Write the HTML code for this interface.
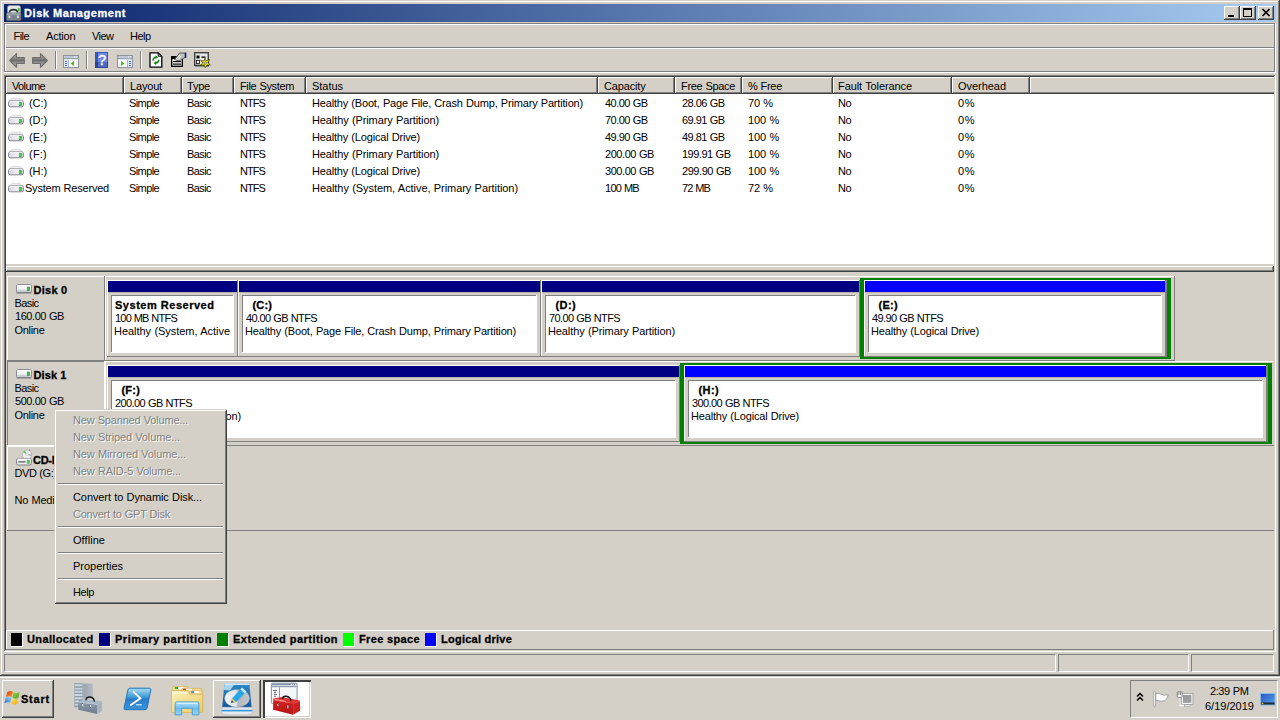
<!DOCTYPE html>
<html><head><meta charset="utf-8"><title>Disk Management</title>
<style>
*{box-sizing:border-box;margin:0;padding:0}
html,body{width:1280px;height:720px;overflow:hidden;background:#d4d0c8}
body{font-family:"Liberation Sans",sans-serif;font-size:11px;color:#000;position:relative}
.a{position:absolute}
.t{position:absolute;white-space:pre;line-height:13px;height:13px;letter-spacing:-0.12px}
.b{font-weight:bold;letter-spacing:0.5px;-webkit-text-stroke:0.3px}
svg{overflow:visible}
</style></head><body>
<div class="a" style="left:0px;top:0px;width:1280px;height:676px;background:#d4d0c8;"></div>
<div class="a" style="left:0px;top:0px;width:1279px;height:1px;background:#d4d0c8;"></div>
<div class="a" style="left:1px;top:1px;width:1277px;height:1px;background:#fff;"></div>
<div class="a" style="left:1px;top:1px;width:1px;height:673px;background:#fff;"></div>
<div class="a" style="left:1279px;top:0px;width:1px;height:676px;background:#404040;"></div>
<div class="a" style="left:0px;top:675px;width:1280px;height:1px;background:#404040;"></div>
<div class="a" style="left:1278px;top:1px;width:1px;height:674px;background:#808080;"></div>
<div class="a" style="left:1px;top:674px;width:1278px;height:1px;background:#808080;"></div>
<div class="a" style="left:4px;top:4px;width:1272px;height:18px;background:linear-gradient(to right,#0a246a,#a6caf0);"></div>
<div class="t b" style="left:24px;top:7px;color:#fff;letter-spacing:0.565px;">Disk Management</div>
<svg class="a" style="left:6px;top:5px" width="16" height="16" viewBox="0 0 16 16"><rect x="1.500" y="0.500" width="13" height="8" rx="2" fill="#e4e6e8" stroke="#8c9094" stroke-width="0.8"/><rect x="12" y="3" width="1.600" height="3.500" fill="#38c838"/><path d="M3.500 7.600 Q3.500 4.600 7.500 4.600 Q11.500 4.600 11.500 7.600" fill="none" stroke="#2c3034" stroke-width="1.700"/><rect x="0.500" y="8" width="14.500" height="7.500" rx="1" fill="#7c848c" stroke="#5c6468" stroke-width="0.8"/><rect x="1" y="8.300" width="13.500" height="1.500" fill="#a4acb4"/><rect x="2.500" y="10.500" width="1.800" height="2.500" fill="#dce0e4"/><rect x="11" y="10.500" width="1.800" height="2.500" fill="#dce0e4"/></svg>
<div class="a" style="left:1224px;top:6px;width:16px;height:14px;background:#d4d0c8;box-shadow:inset -1px -1px 0 #404040,inset 1px 1px 0 #fff,inset -2px -2px 0 #808080"></div>
<div class="a" style="left:1240px;top:6px;width:16px;height:14px;background:#d4d0c8;box-shadow:inset -1px -1px 0 #404040,inset 1px 1px 0 #fff,inset -2px -2px 0 #808080"></div>
<div class="a" style="left:1258px;top:6px;width:16px;height:14px;background:#d4d0c8;box-shadow:inset -1px -1px 0 #404040,inset 1px 1px 0 #fff,inset -2px -2px 0 #808080"></div>
<div class="a" style="left:1228px;top:15px;width:6px;height:2px;background:#000;"></div>
<div class="a" style="left:1243px;top:8px;width:9px;height:9px;border:1px solid #000;border-top-width:2px"></div>
<svg class="a" style="left:1262px;top:9px" width="8" height="7" viewBox="0 0 8 7"><path d="M0.5 0 L7.5 7 M7.5 0 L0.5 7" stroke="#000" stroke-width="1.7"/></svg>
<div class="a" style="left:4px;top:23px;width:1271px;height:1px;background:#808080;"></div>
<div class="a" style="left:4px;top:23px;width:1px;height:49px;background:#808080;"></div>
<div class="a" style="left:5px;top:24px;width:1270px;height:1px;background:#fff;"></div>
<div class="a" style="left:5px;top:24px;width:1px;height:48px;background:#fff;"></div>
<div class="a" style="left:1274px;top:24px;width:1px;height:48px;background:#808080;"></div>
<div class="a" style="left:1275px;top:23px;width:1px;height:50px;background:#fff;"></div>
<div class="a" style="left:6px;top:47px;width:1268px;height:1px;background:#808080;"></div>
<div class="a" style="left:6px;top:48px;width:1268px;height:1px;background:#fff;"></div>
<div class="a" style="left:5px;top:71px;width:1270px;height:1px;background:#808080;"></div>
<div class="a" style="left:4px;top:72px;width:1272px;height:1px;background:#fff;"></div>
<div class="t" style="left:13.5px;top:30px;letter-spacing:-0.559px;">File</div>
<div class="t" style="left:46px;top:30px;letter-spacing:-0.180px;">Action</div>
<div class="t" style="left:92px;top:30px;letter-spacing:-0.539px;">View</div>
<div class="t" style="left:130px;top:30px;letter-spacing:-0.531px;">Help</div>
<div class="a" style="left:55px;top:51px;width:1px;height:18px;background:#808080;"></div>
<div class="a" style="left:56px;top:51px;width:1px;height:18px;background:#fff;"></div>
<div class="a" style="left:86px;top:51px;width:1px;height:18px;background:#808080;"></div>
<div class="a" style="left:87px;top:51px;width:1px;height:18px;background:#fff;"></div>
<div class="a" style="left:140px;top:51px;width:1px;height:18px;background:#808080;"></div>
<div class="a" style="left:141px;top:51px;width:1px;height:18px;background:#fff;"></div>
<svg class="a" style="left:9px;top:53px" width="16" height="15" viewBox="0 0 16 15"><defs><linearGradient id="ga" x1="0" y1="0" x2="0" y2="1"><stop offset="0" stop-color="#c4c4c4"/><stop offset="0.5" stop-color="#6c6c6c"/><stop offset="0.62" stop-color="#8c8c8c"/><stop offset="1" stop-color="#b4b4b4"/></linearGradient></defs><path d="M0.7 7.500 L7.500 0.700 L7.500 4.500 L15.300 4.500 L15.300 10.500 L7.500 10.500 L7.500 14.300 Z" fill="url(#ga)" stroke="#6c6c6c" stroke-width="1.1" stroke-linejoin="round"/></svg>
<svg class="a" style="left:32px;top:53px" width="16" height="15" viewBox="0 0 16 15"><path d="M15.300 7.500 L8.500 0.700 L8.500 4.500 L0.700 4.500 L0.700 10.500 L8.500 10.500 L8.500 14.300 Z" fill="url(#ga)" stroke="#6c6c6c" stroke-width="1.1" stroke-linejoin="round"/></svg>
<svg class="a" style="left:63px;top:55px" width="16" height="13" viewBox="0 0 16 13"><rect x="0.5" y="0.5" width="15" height="12" fill="#f6f6f6" stroke="#8c949c"/><rect x="1" y="1" width="14" height="2" fill="#bcc8d8"/><rect x="1" y="3" width="14" height="1" fill="#98a0a8"/><rect x="1" y="4" width="14" height="1" fill="#dce4ec"/><rect x="1" y="5" width="4" height="7" fill="#e4eaf2"/><rect x="5" y="5" width="1" height="7" fill="#a8b0b8"/><rect x="2" y="6" width="2" height="1" fill="#3a6fd0"/><rect x="2" y="8" width="2" height="1" fill="#3a6fd0"/><rect x="2" y="10" width="2" height="1" fill="#3a6fd0"/><rect x="11" y="1.500" width="1" height="1" fill="#fff"/><rect x="13" y="1.500" width="1" height="1" fill="#fff"/><path d="M11 5.700 L7.700 8.500 L11 11.300 Z" fill="#4cb828"/></svg>
<svg class="a" style="left:95px;top:52px" width="13" height="16" viewBox="0 0 13 16"><rect x="0" y="0" width="13" height="16" fill="#3555c0"/><rect x="3" y="1" width="9" height="9" fill="#7088e0"/><rect x="0" y="10" width="13" height="6" fill="#2c4596"/><rect x="3" y="10" width="9" height="5" fill="#5068c0"/><text x="7" y="13" font-family="Liberation Sans,sans-serif" font-size="14.5" fill="#fff" stroke="#fff" stroke-width="0.35" text-anchor="middle">?</text></svg>
<svg class="a" style="left:117px;top:55px" width="16" height="13" viewBox="0 0 16 13"><rect x="0.5" y="0.5" width="15" height="12" fill="#f6f6f6" stroke="#8c949c"/><rect x="1" y="1" width="14" height="2" fill="#bcc8d8"/><rect x="1" y="3" width="14" height="1" fill="#98a0a8"/><rect x="1" y="4" width="14" height="1" fill="#dce4ec"/><rect x="11" y="5" width="4" height="7" fill="#e4eaf2"/><rect x="10" y="5" width="1" height="7" fill="#a8b0b8"/><rect x="12" y="6" width="2" height="1" fill="#3a6fd0"/><rect x="12" y="8" width="2" height="1" fill="#3a6fd0"/><rect x="12" y="10" width="2" height="1" fill="#3a6fd0"/><rect x="11" y="1.500" width="1" height="1" fill="#fff"/><rect x="13" y="1.500" width="1" height="1" fill="#fff"/><path d="M4 5.700 L7.300 8.500 L4 11.300 Z" fill="#4cb828"/></svg>
<svg class="a" style="left:149px;top:52px" width="14" height="16" viewBox="0 0 14 16"><path d="M1 0.8 L9.2 0.8 L12.8 4.2 L12.8 15.2 L1 15.2 Z" fill="#fff" stroke="#000" stroke-width="1.3"/><path d="M9.2 0.8 L9.2 4.2 L12.8 4.2" fill="none" stroke="#000" stroke-width="1"/><path d="M4.2 8.6 A2.9 2.9 0 0 1 7 5.2 M9.6 7.6 A2.9 2.9 0 0 1 6.8 11" fill="none" stroke="#108010" stroke-width="1.5"/><path d="M6.6 3.3 L9.2 5.2 L6.6 7.1 Z M7.2 9.1 L4.6 11 L7.2 12.9 Z" fill="#108010"/></svg>
<svg class="a" style="left:171px;top:52px" width="16" height="15" viewBox="0 0 16 15"><rect x="0.7" y="4.7" width="10.6" height="9.6" fill="#fff" stroke="#000" stroke-width="1.4"/><rect x="1" y="4.5" width="10" height="2.5" fill="#000"/><rect x="2" y="9" width="8" height="1.2" fill="#000"/><rect x="2" y="11.5" width="8" height="1.2" fill="#000"/><path d="M3.5 7.5 L8.5 1 L14 1 L14 5.5 L8 9 Z" fill="#c0c0c0" stroke="#404040" stroke-width="0.8"/><rect x="14" y="0.5" width="1.3" height="5.5" fill="#1010a0"/><path d="M5 7 L9 3 M6.5 8 L10 4" stroke="#fff" stroke-width="0.8"/></svg>
<svg class="a" style="left:194px;top:52px" width="17" height="16" viewBox="0 0 17 16"><rect x="0.7" y="0.7" width="13.6" height="12.6" fill="#e8e8e8" stroke="#404040" stroke-width="1.4"/><rect x="2.5" y="3.5" width="3" height="3" fill="#000"/><rect x="7.5" y="4.5" width="4" height="1.3" fill="#000"/><rect x="2.5" y="8.5" width="3" height="3" fill="#fff" stroke="#000" stroke-width="0.8"/><rect x="1" y="13" width="14" height="1.5" fill="#404040"/><path d="M11 5.800 L12.200 8.900 L15.600 7.600 L13.800 10.700 L16.400 13 L12.900 12.900 L11.400 16 L10.100 12.900 L6.200 13.500 L8.900 11 L6.600 8.200 L10.100 9.100 Z" fill="#f8f800" stroke="#3c3c00" stroke-width="0.7"/><circle cx="11.200" cy="11" r="1.300" fill="#f0f0e0" stroke="#303030" stroke-width="0.6"/></svg>
<div class="a" style="left:4px;top:75px;width:1271px;height:1px;background:#808080;"></div>
<div class="a" style="left:5px;top:76px;width:1269px;height:1px;background:#404040;"></div>
<div class="a" style="left:4px;top:75px;width:1px;height:576px;background:#808080;"></div>
<div class="a" style="left:5px;top:76px;width:1px;height:574px;background:#404040;"></div>
<div class="a" style="left:1275px;top:75px;width:1px;height:577px;background:#fff;"></div>
<div class="a" style="left:6px;top:77px;width:1268px;height:187px;background:#fff;"></div>
<div class="a" style="left:6px;top:266px;width:1267px;height:1px;background:#fff;"></div>
<div class="a" style="left:6px;top:266px;width:1px;height:5px;background:#fff;"></div>
<div class="a" style="left:1273px;top:266px;width:1px;height:6px;background:#404040;"></div>
<div class="a" style="left:1272px;top:267px;width:1px;height:4px;background:#808080;"></div>
<div class="a" style="left:6px;top:77px;width:118px;height:17px;background:#d4d0c8;box-shadow:inset -1px 0 0 #404040,inset 1px 1px 0 #fff,inset -1px -1px 0 #404040,inset -2px -2px 0 #808080"></div>
<div class="t" style="left:12px;top:80px;letter-spacing:-0.617px;">Volume</div>
<div class="a" style="left:124px;top:77px;width:58px;height:17px;background:#d4d0c8;box-shadow:inset -1px 0 0 #404040,inset 1px 1px 0 #fff,inset -1px -1px 0 #404040,inset -2px -2px 0 #808080"></div>
<div class="t" style="left:130px;top:80px;letter-spacing:-0.172px;">Layout</div>
<div class="a" style="left:182px;top:77px;width:52px;height:17px;background:#d4d0c8;box-shadow:inset -1px 0 0 #404040,inset 1px 1px 0 #fff,inset -1px -1px 0 #404040,inset -2px -2px 0 #808080"></div>
<div class="t" style="left:187px;top:80px;letter-spacing:-0.215px;">Type</div>
<div class="a" style="left:234px;top:77px;width:72px;height:17px;background:#d4d0c8;box-shadow:inset -1px 0 0 #404040,inset 1px 1px 0 #fff,inset -1px -1px 0 #404040,inset -2px -2px 0 #808080"></div>
<div class="t" style="left:240px;top:80px;letter-spacing:-0.350px;word-spacing:0.38px;">File System</div>
<div class="a" style="left:306px;top:77px;width:292px;height:17px;background:#d4d0c8;box-shadow:inset -1px 0 0 #404040,inset 1px 1px 0 #fff,inset -1px -1px 0 #404040,inset -2px -2px 0 #808080"></div>
<div class="t" style="left:312px;top:80px;letter-spacing:-0.031px;">Status</div>
<div class="a" style="left:598px;top:77px;width:77px;height:17px;background:#d4d0c8;box-shadow:inset -1px 0 0 #404040,inset 1px 1px 0 #fff,inset -1px -1px 0 #404040,inset -2px -2px 0 #808080"></div>
<div class="t" style="left:604px;top:80px;letter-spacing:-0.162px;">Capacity</div>
<div class="a" style="left:675px;top:77px;width:67px;height:17px;background:#d4d0c8;box-shadow:inset -1px 0 0 #404040,inset 1px 1px 0 #fff,inset -1px -1px 0 #404040,inset -2px -2px 0 #808080"></div>
<div class="t" style="left:681px;top:80px;letter-spacing:-0.326px;word-spacing:0.38px;">Free Space</div>
<div class="a" style="left:742px;top:77px;width:91px;height:17px;background:#d4d0c8;box-shadow:inset -1px 0 0 #404040,inset 1px 1px 0 #fff,inset -1px -1px 0 #404040,inset -2px -2px 0 #808080"></div>
<div class="t" style="left:748px;top:80px;letter-spacing:-0.308px;word-spacing:0.38px;">% Free</div>
<div class="a" style="left:833px;top:77px;width:119px;height:17px;background:#d4d0c8;box-shadow:inset -1px 0 0 #404040,inset 1px 1px 0 #fff,inset -1px -1px 0 #404040,inset -2px -2px 0 #808080"></div>
<div class="t" style="left:838px;top:80px;letter-spacing:-0.093px;word-spacing:0.38px;">Fault Tolerance</div>
<div class="a" style="left:952px;top:77px;width:78px;height:17px;background:#d4d0c8;box-shadow:inset -1px 0 0 #404040,inset 1px 1px 0 #fff,inset -1px -1px 0 #404040,inset -2px -2px 0 #808080"></div>
<div class="t" style="left:958px;top:80px;letter-spacing:-0.039px;">Overhead</div>
<div class="a" style="left:1030px;top:77px;width:244px;height:17px;background:#d4d0c8;box-shadow:inset 1px 1px 0 #fff,inset 0 -1px 0 #404040,inset 0 -2px 0 #808080"></div>
<div class="a" style="left:6px;top:93px;width:1268px;height:1px;background:#404040;"></div>
<svg class="a" style="left:8px;top:98px" width="16" height="10" viewBox="0 0 16 10"><defs><linearGradient id="gd" x1="0" y1="0" x2="1" y2="0"><stop offset="0" stop-color="#d8d8e4"/><stop offset="0.6" stop-color="#f0f0f6"/><stop offset="1" stop-color="#d0d0d8"/></linearGradient></defs><path d="M4 0.300 L12 0.300 L15 3 L1 3 Z" fill="#ececf0" stroke="#c4c4c8" stroke-width="0.500"/><rect x="0.600" y="2.900" width="14.800" height="5.900" rx="1.600" fill="url(#gd)" stroke="#84848c" stroke-width="1"/><path d="M1.500 3.400 L14.500 3.400" stroke="#fafafc" stroke-width="0.900"/><rect x="11.400" y="4.100" width="2.100" height="3.700" fill="#34d434" stroke="#587858" stroke-width="0.400"/></svg>
<div class="t" style="left:29px;top:97px;letter-spacing:-0.082px;">(C:)</div>
<div class="t" style="left:129px;top:97px;letter-spacing:-0.604px;">Simple</div>
<div class="t" style="left:187px;top:97px;letter-spacing:-0.581px;">Basic</div>
<div class="t" style="left:240px;top:97px;letter-spacing:-0.934px;">NTFS</div>
<div class="t" style="left:312px;top:97px;letter-spacing:-0.175px;word-spacing:0.38px;">Healthy (Boot, Page File, Crash Dump, Primary Partition)</div>
<div class="t" style="left:605px;top:97px;letter-spacing:-0.546px;word-spacing:0.38px;">40.00 GB</div>
<div class="t" style="left:682px;top:97px;letter-spacing:-0.546px;word-spacing:0.38px;">28.06 GB</div>
<div class="t" style="left:748px;top:97px;letter-spacing:-0.115px;word-spacing:0.38px;">70 %</div>
<div class="t" style="left:838px;top:97px;letter-spacing:-0.531px;">No</div>
<div class="t" style="left:958px;top:97px;letter-spacing:0.547px;">0%</div>
<svg class="a" style="left:8px;top:115px" width="16" height="10" viewBox="0 0 16 10"><path d="M4 0.300 L12 0.300 L15 3 L1 3 Z" fill="#ececf0" stroke="#c4c4c8" stroke-width="0.500"/><rect x="0.600" y="2.900" width="14.800" height="5.900" rx="1.600" fill="url(#gd)" stroke="#84848c" stroke-width="1"/><path d="M1.500 3.400 L14.500 3.400" stroke="#fafafc" stroke-width="0.900"/><rect x="11.400" y="4.100" width="2.100" height="3.700" fill="#34d434" stroke="#587858" stroke-width="0.400"/></svg>
<div class="t" style="left:29px;top:114px;letter-spacing:-0.082px;">(D:)</div>
<div class="t" style="left:129px;top:114px;letter-spacing:-0.604px;">Simple</div>
<div class="t" style="left:187px;top:114px;letter-spacing:-0.581px;">Basic</div>
<div class="t" style="left:240px;top:114px;letter-spacing:-0.934px;">NTFS</div>
<div class="t" style="left:312px;top:114px;letter-spacing:-0.102px;word-spacing:0.38px;">Healthy (Primary Partition)</div>
<div class="t" style="left:605px;top:114px;letter-spacing:-0.546px;word-spacing:0.38px;">70.00 GB</div>
<div class="t" style="left:682px;top:114px;letter-spacing:-0.546px;word-spacing:0.38px;">69.91 GB</div>
<div class="t" style="left:748px;top:114px;letter-spacing:-0.057px;word-spacing:0.38px;">100 %</div>
<div class="t" style="left:838px;top:114px;letter-spacing:-0.531px;">No</div>
<div class="t" style="left:958px;top:114px;letter-spacing:0.547px;">0%</div>
<svg class="a" style="left:8px;top:132px" width="16" height="10" viewBox="0 0 16 10"><path d="M4 0.300 L12 0.300 L15 3 L1 3 Z" fill="#ececf0" stroke="#c4c4c8" stroke-width="0.500"/><rect x="0.600" y="2.900" width="14.800" height="5.900" rx="1.600" fill="url(#gd)" stroke="#84848c" stroke-width="1"/><path d="M1.500 3.400 L14.500 3.400" stroke="#fafafc" stroke-width="0.900"/><rect x="11.400" y="4.100" width="2.100" height="3.700" fill="#34d434" stroke="#587858" stroke-width="0.400"/></svg>
<div class="t" style="left:29px;top:131px;letter-spacing:0.066px;">(E:)</div>
<div class="t" style="left:129px;top:131px;letter-spacing:-0.604px;">Simple</div>
<div class="t" style="left:187px;top:131px;letter-spacing:-0.581px;">Basic</div>
<div class="t" style="left:240px;top:131px;letter-spacing:-0.934px;">NTFS</div>
<div class="t" style="left:312px;top:131px;letter-spacing:-0.175px;word-spacing:0.38px;">Healthy (Logical Drive)</div>
<div class="t" style="left:605px;top:131px;letter-spacing:-0.546px;word-spacing:0.38px;">49.90 GB</div>
<div class="t" style="left:682px;top:131px;letter-spacing:-0.546px;word-spacing:0.38px;">49.81 GB</div>
<div class="t" style="left:748px;top:131px;letter-spacing:-0.057px;word-spacing:0.38px;">100 %</div>
<div class="t" style="left:838px;top:131px;letter-spacing:-0.531px;">No</div>
<div class="t" style="left:958px;top:131px;letter-spacing:0.547px;">0%</div>
<svg class="a" style="left:8px;top:149px" width="16" height="10" viewBox="0 0 16 10"><path d="M4 0.300 L12 0.300 L15 3 L1 3 Z" fill="#ececf0" stroke="#c4c4c8" stroke-width="0.500"/><rect x="0.600" y="2.900" width="14.800" height="5.900" rx="1.600" fill="url(#gd)" stroke="#84848c" stroke-width="1"/><path d="M1.500 3.400 L14.500 3.400" stroke="#fafafc" stroke-width="0.900"/><rect x="11.400" y="4.100" width="2.100" height="3.700" fill="#34d434" stroke="#587858" stroke-width="0.400"/></svg>
<div class="t" style="left:29px;top:148px;letter-spacing:0.223px;">(F:)</div>
<div class="t" style="left:129px;top:148px;letter-spacing:-0.604px;">Simple</div>
<div class="t" style="left:187px;top:148px;letter-spacing:-0.581px;">Basic</div>
<div class="t" style="left:240px;top:148px;letter-spacing:-0.934px;">NTFS</div>
<div class="t" style="left:312px;top:148px;letter-spacing:-0.102px;word-spacing:0.38px;">Healthy (Primary Partition)</div>
<div class="t" style="left:605px;top:148px;letter-spacing:-0.442px;word-spacing:0.38px;">200.00 GB</div>
<div class="t" style="left:682px;top:148px;letter-spacing:-0.497px;word-spacing:0.38px;">199.91 GB</div>
<div class="t" style="left:748px;top:148px;letter-spacing:-0.057px;word-spacing:0.38px;">100 %</div>
<div class="t" style="left:838px;top:148px;letter-spacing:-0.531px;">No</div>
<div class="t" style="left:958px;top:148px;letter-spacing:0.547px;">0%</div>
<svg class="a" style="left:8px;top:166px" width="16" height="10" viewBox="0 0 16 10"><path d="M4 0.300 L12 0.300 L15 3 L1 3 Z" fill="#ececf0" stroke="#c4c4c8" stroke-width="0.500"/><rect x="0.600" y="2.900" width="14.800" height="5.900" rx="1.600" fill="url(#gd)" stroke="#84848c" stroke-width="1"/><path d="M1.500 3.400 L14.500 3.400" stroke="#fafafc" stroke-width="0.900"/><rect x="11.400" y="4.100" width="2.100" height="3.700" fill="#34d434" stroke="#587858" stroke-width="0.400"/></svg>
<div class="t" style="left:29px;top:165px;letter-spacing:-0.082px;">(H:)</div>
<div class="t" style="left:129px;top:165px;letter-spacing:-0.604px;">Simple</div>
<div class="t" style="left:187px;top:165px;letter-spacing:-0.581px;">Basic</div>
<div class="t" style="left:240px;top:165px;letter-spacing:-0.934px;">NTFS</div>
<div class="t" style="left:312px;top:165px;letter-spacing:-0.175px;word-spacing:0.38px;">Healthy (Logical Drive)</div>
<div class="t" style="left:605px;top:165px;letter-spacing:-0.442px;word-spacing:0.38px;">300.00 GB</div>
<div class="t" style="left:682px;top:165px;letter-spacing:-0.442px;word-spacing:0.38px;">299.90 GB</div>
<div class="t" style="left:748px;top:165px;letter-spacing:-0.057px;word-spacing:0.38px;">100 %</div>
<div class="t" style="left:838px;top:165px;letter-spacing:-0.531px;">No</div>
<div class="t" style="left:958px;top:165px;letter-spacing:0.547px;">0%</div>
<svg class="a" style="left:8px;top:183px" width="16" height="10" viewBox="0 0 16 10"><path d="M4 0.300 L12 0.300 L15 3 L1 3 Z" fill="#ececf0" stroke="#c4c4c8" stroke-width="0.500"/><rect x="0.600" y="2.900" width="14.800" height="5.900" rx="1.600" fill="url(#gd)" stroke="#84848c" stroke-width="1"/><path d="M1.500 3.400 L14.500 3.400" stroke="#fafafc" stroke-width="0.900"/><rect x="11.400" y="4.100" width="2.100" height="3.700" fill="#34d434" stroke="#587858" stroke-width="0.400"/></svg>
<div class="t" style="left:25px;top:182px;letter-spacing:-0.213px;word-spacing:0.38px;">System Reserved</div>
<div class="t" style="left:129px;top:182px;letter-spacing:-0.604px;">Simple</div>
<div class="t" style="left:187px;top:182px;letter-spacing:-0.581px;">Basic</div>
<div class="t" style="left:240px;top:182px;letter-spacing:-0.934px;">NTFS</div>
<div class="t" style="left:312px;top:182px;letter-spacing:-0.064px;word-spacing:0.38px;">Healthy (System, Active, Primary Partition)</div>
<div class="t" style="left:605px;top:182px;letter-spacing:-0.717px;word-spacing:0.38px;">100 MB</div>
<div class="t" style="left:682px;top:182px;letter-spacing:-0.835px;word-spacing:0.38px;">72 MB</div>
<div class="t" style="left:748px;top:182px;letter-spacing:-0.115px;word-spacing:0.38px;">72 %</div>
<div class="t" style="left:838px;top:182px;letter-spacing:-0.531px;">No</div>
<div class="t" style="left:958px;top:182px;letter-spacing:0.547px;">0%</div>
<div class="a" style="left:7px;top:270px;width:1266px;height:1px;background:#808080;"></div>
<div class="a" style="left:6px;top:271px;width:1268px;height:1px;background:#404040;"></div>
<div class="a" style="left:4px;top:651px;width:1272px;height:1px;background:#fff;"></div>
<div class="a" style="left:7px;top:276px;width:98px;height:1px;background:#fff;"></div>
<div class="a" style="left:7px;top:276px;width:1px;height:85px;background:#fff;"></div>
<div class="a" style="left:7px;top:360px;width:98px;height:1px;background:#808080;"></div>
<div class="a" style="left:104px;top:276px;width:1px;height:85px;background:#808080;"></div>
<div class="a" style="left:105px;top:276px;width:1069px;height:1px;background:#fff;"></div>
<div class="a" style="left:105px;top:276px;width:1px;height:85px;background:#fff;"></div>
<div class="a" style="left:105px;top:360px;width:1070px;height:1px;background:#808080;"></div>
<div class="a" style="left:1174px;top:276px;width:1px;height:85px;background:#808080;"></div>
<svg class="a" style="left:16px;top:284px" width="16" height="10" viewBox="0 0 16 10"><rect x="0.500" y="0.500" width="15" height="8.300" rx="1.200" fill="#f4f4f8" stroke="#8c9094" stroke-width="1"/><rect x="1.200" y="1.200" width="13.600" height="1.200" fill="#fff"/><rect x="1.200" y="5.800" width="13.600" height="2.400" fill="#c8ccd4"/><path d="M0.600 8.800 L15.400 8.800" stroke="#6c7074" stroke-width="1"/><rect x="11.400" y="3" width="2.200" height="3.600" fill="#34cc34" stroke="#406040" stroke-width="0.500"/></svg>
<div class="t b" style="left:33.5px;top:284px;letter-spacing:0.263px;">Disk 0</div>
<div class="t" style="left:14.5px;top:297px;letter-spacing:-0.581px;">Basic</div>
<div class="t" style="left:15px;top:310px;letter-spacing:-0.442px;word-spacing:0.38px;">160.00 GB</div>
<div class="t" style="left:14.5px;top:324px;letter-spacing:-0.299px;">Online</div>
<div class="a" style="left:107px;top:280px;width:131px;height:1px;background:#fff;"></div>
<div class="a" style="left:107px;top:280px;width:1px;height:77px;background:#fff;"></div>
<div class="a" style="left:108px;top:281px;width:129px;height:11px;background:#000080;"></div>
<div class="a" style="left:237px;top:280px;width:1px;height:77px;background:#808080;"></div>
<div class="a" style="left:107px;top:356px;width:131px;height:1px;background:#808080;"></div>
<div class="a" style="left:108px;top:292px;width:129px;height:1px;background:#b8b4ac;"></div>
<div class="a" style="left:111px;top:295px;width:123px;height:58px;background:#fff;"></div>
<div class="a" style="left:111px;top:295px;width:122px;height:1px;background:#808080;"></div>
<div class="a" style="left:111px;top:295px;width:1px;height:57px;background:#808080;"></div>
<div class="t b" style="left:115px;top:299px;letter-spacing:0.518px;">System Reserved</div>
<div class="t" style="left:115px;top:312px;letter-spacing:-0.768px;word-spacing:0.38px;">100 MB NTFS</div>
<div class="t" style="left:114px;top:325px;letter-spacing:-0.040px;word-spacing:0.38px;">Healthy (System, Active</div>
<div class="a" style="left:238px;top:280px;width:303px;height:1px;background:#fff;"></div>
<div class="a" style="left:238px;top:280px;width:1px;height:77px;background:#fff;"></div>
<div class="a" style="left:239px;top:281px;width:301px;height:11px;background:#000080;"></div>
<div class="a" style="left:540px;top:280px;width:1px;height:77px;background:#808080;"></div>
<div class="a" style="left:238px;top:356px;width:303px;height:1px;background:#808080;"></div>
<div class="a" style="left:239px;top:292px;width:301px;height:1px;background:#b8b4ac;"></div>
<div class="a" style="left:242px;top:295px;width:295px;height:58px;background:#fff;"></div>
<div class="a" style="left:242px;top:295px;width:294px;height:1px;background:#808080;"></div>
<div class="a" style="left:242px;top:295px;width:1px;height:57px;background:#808080;"></div>
<div class="t b" style="left:252.5px;top:299px;letter-spacing:0.141px;">(C:)</div>
<div class="t" style="left:246px;top:312px;letter-spacing:-0.617px;word-spacing:0.38px;">40.00 GB NTFS</div>
<div class="t" style="left:245px;top:325px;letter-spacing:-0.175px;word-spacing:0.38px;">Healthy (Boot, Page File, Crash Dump, Primary Partition)</div>
<div class="a" style="left:541px;top:280px;width:319px;height:1px;background:#fff;"></div>
<div class="a" style="left:541px;top:280px;width:1px;height:77px;background:#fff;"></div>
<div class="a" style="left:542px;top:281px;width:317px;height:11px;background:#000080;"></div>
<div class="a" style="left:859px;top:280px;width:1px;height:77px;background:#808080;"></div>
<div class="a" style="left:541px;top:356px;width:319px;height:1px;background:#808080;"></div>
<div class="a" style="left:542px;top:292px;width:317px;height:1px;background:#b8b4ac;"></div>
<div class="a" style="left:545px;top:295px;width:311px;height:58px;background:#fff;"></div>
<div class="a" style="left:545px;top:295px;width:310px;height:1px;background:#808080;"></div>
<div class="a" style="left:545px;top:295px;width:1px;height:57px;background:#808080;"></div>
<div class="t b" style="left:555.5px;top:299px;letter-spacing:0.391px;">(D:)</div>
<div class="t" style="left:549px;top:312px;letter-spacing:-0.617px;word-spacing:0.38px;">70.00 GB NTFS</div>
<div class="t" style="left:548px;top:325px;letter-spacing:-0.102px;word-spacing:0.38px;">Healthy (Primary Partition)</div>
<div class="a" style="left:860px;top:278px;width:311px;height:2px;background:#008000;"></div>
<div class="a" style="left:860px;top:357px;width:311px;height:2px;background:#008000;"></div>
<div class="a" style="left:860px;top:278px;width:4px;height:81px;background:#008000;"></div>
<div class="a" style="left:1167px;top:278px;width:4px;height:81px;background:#008000;"></div>
<div class="a" style="left:864px;top:280px;width:302px;height:1px;background:#fff;"></div>
<div class="a" style="left:864px;top:280px;width:1px;height:77px;background:#fff;"></div>
<div class="a" style="left:865px;top:281px;width:300px;height:11px;background:#0000ff;"></div>
<div class="a" style="left:1165px;top:280px;width:1px;height:77px;background:#808080;"></div>
<div class="a" style="left:1166px;top:280px;width:1px;height:77px;background:#808080;"></div>
<div class="a" style="left:864px;top:356px;width:302px;height:1px;background:#808080;"></div>
<div class="a" style="left:865px;top:292px;width:300px;height:1px;background:#b8b4ac;"></div>
<div class="a" style="left:868px;top:295px;width:294px;height:58px;background:#fff;"></div>
<div class="a" style="left:868px;top:295px;width:293px;height:1px;background:#808080;"></div>
<div class="a" style="left:868px;top:295px;width:1px;height:57px;background:#808080;"></div>
<div class="t b" style="left:878.5px;top:299px;letter-spacing:0.293px;">(E:)</div>
<div class="t" style="left:872px;top:312px;letter-spacing:-0.617px;word-spacing:0.38px;">49.90 GB NTFS</div>
<div class="t" style="left:871px;top:325px;letter-spacing:-0.175px;word-spacing:0.38px;">Healthy (Logical Drive)</div>
<div class="a" style="left:7px;top:361px;width:98px;height:1px;background:#808080;"></div>
<div class="a" style="left:7px;top:361px;width:1px;height:85px;background:#808080;"></div>
<div class="a" style="left:7px;top:445px;width:98px;height:1px;background:#fff;"></div>
<div class="a" style="left:104px;top:361px;width:1px;height:85px;background:#fff;"></div>
<div class="a" style="left:105px;top:361px;width:1168px;height:1px;background:#fff;"></div>
<div class="a" style="left:105px;top:361px;width:1px;height:85px;background:#fff;"></div>
<div class="a" style="left:105px;top:445px;width:1169px;height:1px;background:#808080;"></div>
<svg class="a" style="left:16px;top:369px" width="16" height="10" viewBox="0 0 16 10"><rect x="0.500" y="0.500" width="15" height="8.300" rx="1.200" fill="#f4f4f8" stroke="#8c9094" stroke-width="1"/><rect x="1.200" y="1.200" width="13.600" height="1.200" fill="#fff"/><rect x="1.200" y="5.800" width="13.600" height="2.400" fill="#c8ccd4"/><path d="M0.600 8.800 L15.400 8.800" stroke="#6c7074" stroke-width="1"/><rect x="11.400" y="3" width="2.200" height="3.600" fill="#34cc34" stroke="#406040" stroke-width="0.500"/></svg>
<div class="t b" style="left:33.5px;top:369px;letter-spacing:0.096px;">Disk 1</div>
<div class="t" style="left:14.5px;top:382px;letter-spacing:-0.581px;">Basic</div>
<div class="t" style="left:15px;top:395px;letter-spacing:-0.442px;word-spacing:0.38px;">500.00 GB</div>
<div class="t" style="left:14.5px;top:409px;letter-spacing:-0.299px;">Online</div>
<div class="a" style="left:107px;top:365px;width:573px;height:1px;background:#fff;"></div>
<div class="a" style="left:107px;top:365px;width:1px;height:77px;background:#fff;"></div>
<div class="a" style="left:108px;top:366px;width:571px;height:11px;background:#000080;"></div>
<div class="a" style="left:679px;top:365px;width:1px;height:77px;background:#808080;"></div>
<div class="a" style="left:107px;top:441px;width:573px;height:1px;background:#808080;"></div>
<div class="a" style="left:108px;top:377px;width:571px;height:1px;background:#b8b4ac;"></div>
<div class="a" style="left:111px;top:380px;width:565px;height:58px;background:#fff;"></div>
<div class="a" style="left:111px;top:380px;width:564px;height:1px;background:#808080;"></div>
<div class="a" style="left:111px;top:380px;width:1px;height:57px;background:#808080;"></div>
<div class="t b" style="left:121.5px;top:384px;letter-spacing:0.195px;">(F:)</div>
<div class="t" style="left:115px;top:397px;letter-spacing:-0.581px;word-spacing:0.38px;">200.00 GB NTFS</div>
<div class="t" style="left:114px;top:410px;letter-spacing:-0.102px;word-spacing:0.38px;">Healthy (Primary Partition)</div>
<div class="a" style="left:680px;top:363px;width:592px;height:2px;background:#008000;"></div>
<div class="a" style="left:680px;top:442px;width:592px;height:2px;background:#008000;"></div>
<div class="a" style="left:680px;top:363px;width:4px;height:81px;background:#008000;"></div>
<div class="a" style="left:1268px;top:363px;width:4px;height:81px;background:#008000;"></div>
<div class="a" style="left:684px;top:365px;width:583px;height:1px;background:#fff;"></div>
<div class="a" style="left:684px;top:365px;width:1px;height:77px;background:#fff;"></div>
<div class="a" style="left:685px;top:366px;width:581px;height:11px;background:#0000ff;"></div>
<div class="a" style="left:1266px;top:365px;width:1px;height:77px;background:#808080;"></div>
<div class="a" style="left:1267px;top:365px;width:1px;height:77px;background:#808080;"></div>
<div class="a" style="left:684px;top:441px;width:583px;height:1px;background:#808080;"></div>
<div class="a" style="left:685px;top:377px;width:581px;height:1px;background:#b8b4ac;"></div>
<div class="a" style="left:688px;top:380px;width:575px;height:58px;background:#fff;"></div>
<div class="a" style="left:688px;top:380px;width:574px;height:1px;background:#808080;"></div>
<div class="a" style="left:688px;top:380px;width:1px;height:57px;background:#808080;"></div>
<div class="t b" style="left:698.5px;top:384px;letter-spacing:0.391px;">(H:)</div>
<div class="t" style="left:692px;top:397px;letter-spacing:-0.581px;word-spacing:0.38px;">300.00 GB NTFS</div>
<div class="t" style="left:691px;top:410px;letter-spacing:-0.175px;word-spacing:0.38px;">Healthy (Logical Drive)</div>
<div class="a" style="left:8px;top:447px;width:97px;height:83px;background:#d4d0c8;"></div>
<div class="a" style="left:7px;top:446px;width:98px;height:1px;background:#fff;"></div>
<div class="a" style="left:7px;top:446px;width:1px;height:85px;background:#fff;"></div>
<div class="a" style="left:7px;top:530px;width:98px;height:1px;background:#808080;"></div>
<div class="a" style="left:104px;top:446px;width:1px;height:85px;background:#808080;"></div>
<div class="t b" style="left:33px;top:454px;letter-spacing:-0.299px;">CD-ROM 0</div>
<div class="t" style="left:14.5px;top:467px;letter-spacing:-0.452px;word-spacing:0.38px;">DVD (G:)</div>
<div class="t" style="left:14.5px;top:494px;letter-spacing:-0.182px;word-spacing:0.38px;">No Media</div>
<svg class="a" style="left:16px;top:449px" width="17" height="18" viewBox="0 0 17 18"><circle cx="11" cy="5.600" r="4.700" fill="#f2f2f4" stroke="#a4a8ac" stroke-width="0.700"/><path d="M11 5.600 L7 3.200 A4.700 4.700 0 0 1 9 1.400 Z" fill="#58d048"/><path d="M11 5.600 L15.300 7.500 A4.700 4.700 0 0 0 15.500 4.500 Z" fill="#b4b8bc"/><rect x="13" y="0.600" width="1.200" height="1.200" fill="#e040e0"/><circle cx="11" cy="5.600" r="1.200" fill="#fff" stroke="#a8acb0" stroke-width="0.500"/><path d="M3 9.400 L9 8.600 L13 9.400 Z" fill="#f0f0f2"/><rect x="0.600" y="9.400" width="14.800" height="6.600" rx="1.800" fill="#ececf0" stroke="#7c7c84" stroke-width="1"/><path d="M1.600 10.200 L14.400 10.200" stroke="#fff" stroke-width="1"/><rect x="2.200" y="12.200" width="7.600" height="1.200" rx="0.600" fill="#5c5c60"/><rect x="11.400" y="11.200" width="2" height="3.400" fill="#34d434" stroke="#587858" stroke-width="0.400"/></svg>
<div class="a" style="left:105px;top:530px;width:1169px;height:1px;background:#808080;"></div>
<div class="a" style="left:6px;top:630px;width:1268px;height:1px;background:#fff;"></div>
<div class="a" style="left:6px;top:630px;width:1px;height:20px;background:#fff;"></div>
<div class="a" style="left:6px;top:649px;width:1268px;height:1px;background:#808080;"></div>
<div class="a" style="left:1273px;top:630px;width:1px;height:20px;background:#808080;"></div>
<div class="a" style="left:11px;top:633px;width:12px;height:14px;background:#fff;"></div>
<div class="a" style="left:11px;top:633px;width:11px;height:13px;background:#000;"></div>
<div class="t b" style="left:27px;top:633px;letter-spacing:0.376px;">Unallocated</div>
<div class="a" style="left:99px;top:633px;width:12px;height:14px;background:#fff;"></div>
<div class="a" style="left:99px;top:633px;width:11px;height:13px;background:#000080;"></div>
<div class="t b" style="left:115px;top:633px;letter-spacing:0.528px;">Primary partition</div>
<div class="a" style="left:217px;top:633px;width:12px;height:14px;background:#fff;"></div>
<div class="a" style="left:217px;top:633px;width:11px;height:13px;background:#008000;"></div>
<div class="t b" style="left:233px;top:633px;letter-spacing:0.469px;">Extended partition</div>
<div class="a" style="left:343px;top:633px;width:12px;height:14px;background:#fff;"></div>
<div class="a" style="left:343px;top:633px;width:11px;height:13px;background:#00ff00;"></div>
<div class="t b" style="left:359px;top:633px;letter-spacing:0.352px;">Free space</div>
<div class="a" style="left:425px;top:633px;width:12px;height:14px;background:#fff;"></div>
<div class="a" style="left:425px;top:633px;width:11px;height:13px;background:#0000ff;"></div>
<div class="t b" style="left:441px;top:633px;letter-spacing:0.242px;">Logical drive</div>
<div class="a" style="left:4px;top:654px;width:1052px;height:18px;border:1px solid;border-color:#808080 #fff #fff #808080;"></div>
<div class="a" style="left:1058px;top:654px;width:131px;height:18px;border:1px solid;border-color:#808080 #fff #fff #808080;"></div>
<div class="a" style="left:1191px;top:654px;width:83px;height:18px;border:1px solid;border-color:#808080 #fff #fff #808080;"></div>
<div class="a" style="left:54px;top:409px;width:173px;height:195px;background:#d4d0c8;box-shadow:inset 1px 1px 0 #d4d0c8,inset -1px -1px 0 #404040,inset 2px 2px 0 #fff,inset -2px -2px 0 #808080"></div>
<div class="t" style="left:74px;top:415px;color:#fff;letter-spacing:-0.181px;word-spacing:0.38px;">New Spanned Volume...</div>
<div class="t" style="left:73px;top:414px;color:#808080;letter-spacing:-0.181px;word-spacing:0.38px;">New Spanned Volume...</div>
<div class="t" style="left:74px;top:432px;color:#fff;letter-spacing:-0.124px;word-spacing:0.38px;">New Striped Volume...</div>
<div class="t" style="left:73px;top:431px;color:#808080;letter-spacing:-0.124px;word-spacing:0.38px;">New Striped Volume...</div>
<div class="t" style="left:74px;top:449px;color:#fff;letter-spacing:-0.123px;word-spacing:0.38px;">New Mirrored Volume...</div>
<div class="t" style="left:73px;top:448px;color:#808080;letter-spacing:-0.123px;word-spacing:0.38px;">New Mirrored Volume...</div>
<div class="t" style="left:74px;top:466px;color:#fff;letter-spacing:-0.140px;word-spacing:0.38px;">New RAID-5 Volume...</div>
<div class="t" style="left:73px;top:465px;color:#808080;letter-spacing:-0.140px;word-spacing:0.38px;">New RAID-5 Volume...</div>
<div class="a" style="left:58px;top:483px;width:165px;height:1px;background:#808080;"></div>
<div class="a" style="left:58px;top:484px;width:165px;height:1px;background:#fff;"></div>
<div class="t" style="left:73px;top:491px;letter-spacing:-0.090px;word-spacing:0.38px;">Convert to Dynamic Disk...</div>
<div class="t" style="left:74px;top:509px;color:#fff;letter-spacing:-0.253px;word-spacing:0.38px;">Convert to GPT Disk</div>
<div class="t" style="left:73px;top:508px;color:#808080;letter-spacing:-0.253px;word-spacing:0.38px;">Convert to GPT Disk</div>
<div class="a" style="left:58px;top:526px;width:165px;height:1px;background:#808080;"></div>
<div class="a" style="left:58px;top:527px;width:165px;height:1px;background:#fff;"></div>
<div class="t" style="left:73px;top:534px;letter-spacing:0.058px;">Offline</div>
<div class="a" style="left:58px;top:552px;width:165px;height:1px;background:#808080;"></div>
<div class="a" style="left:58px;top:553px;width:165px;height:1px;background:#fff;"></div>
<div class="t" style="left:73px;top:560px;letter-spacing:-0.014px;">Properties</div>
<div class="a" style="left:58px;top:578px;width:165px;height:1px;background:#808080;"></div>
<div class="a" style="left:58px;top:579px;width:165px;height:1px;background:#fff;"></div>
<div class="t" style="left:73px;top:586px;letter-spacing:-0.406px;">Help</div>
<div class="a" style="left:0px;top:676px;width:1280px;height:44px;background:#d4d0c8;"></div>
<div class="a" style="left:0px;top:677px;width:1280px;height:1px;background:#fff;"></div>
<div class="a" style="left:2px;top:680px;width:52px;height:38px;background:#d4d0c8;box-shadow:inset -1px -1px 0 #404040,inset 1px 1px 0 #fff,inset -2px -2px 0 #808080"></div>
<svg class="a" style="left:4px;top:690px" width="16" height="16" viewBox="0 0 16 16"><defs><linearGradient id="fr" x1="0" y1="0" x2="1" y2="1"><stop offset="0" stop-color="#e03414"/><stop offset="1" stop-color="#f8a028"/></linearGradient><linearGradient id="fg" x1="0" y1="0" x2="1" y2="1"><stop offset="0" stop-color="#a4d448"/><stop offset="1" stop-color="#48a028"/></linearGradient><linearGradient id="fb" x1="0" y1="1" x2="1" y2="0"><stop offset="0" stop-color="#2870d0"/><stop offset="1" stop-color="#a0d4f4"/></linearGradient><linearGradient id="fy" x1="0" y1="0" x2="1" y2="1"><stop offset="0" stop-color="#fce468"/><stop offset="1" stop-color="#f4a410"/></linearGradient></defs><path d="M3.200 2.200 Q6 0.200 8.900 1.700 L7.700 6.900 Q5 5.600 2 7.100 Z" fill="url(#fr)"/><path d="M9.500 2.300 Q12.400 4 15.700 2.100 L14.300 7.900 Q11.400 9.700 8.300 7.600 Z" fill="url(#fg)"/><path d="M1.800 7.800 Q4.600 6.200 7.500 7.500 L6.300 12.700 Q3.400 11.600 0.300 13.300 Z" fill="url(#fb)"/><path d="M8.100 8.500 Q11 10.400 14.100 8.700 L12.900 13.900 Q9.800 15.500 6.900 13.600 Z" fill="url(#fy)"/></svg>
<div class="t b" style="left:21px;top:693px;letter-spacing:0.787px;">Start</div>
<svg class="a" style="left:64px;top:678px" width="50" height="40" viewBox="0 0 50 40"><defs><linearGradient id="g1" x1="0" y1="0" x2="1" y2="0"><stop offset="0" stop-color="#9ca2aa"/><stop offset="1" stop-color="#b8bcc4"/></linearGradient><linearGradient id="g2" x1="0" y1="0" x2="0" y2="1"><stop offset="0" stop-color="#8c9cac"/><stop offset="1" stop-color="#6c7c8c"/></linearGradient></defs><rect x="10.3" y="5.2" width="8.5" height="24" fill="#8c9ca8"/><path d="M10.6 7.3 H18.4 M10.6 10.6 H18.4 M10.6 13.8 H18.4 M10.6 17 H18.4 M10.6 20.2 H18.4 M10.6 23.4 H15 M10.6 26.6 H14.5" stroke="#c8d6e0" stroke-width="1.9"/><rect x="19.2" y="5.6" width="9.7" height="15" fill="url(#g1)"/><path d="M14.2 24 L33.3 26.5 L33.3 36.1 L14.2 31.7 Z" fill="url(#g2)"/><path d="M33.3 26.5 L38 23.3 L38 32.8 L33.3 36.1 Z" fill="#a4b4c0"/><path d="M14.2 24 L20.5 21.2 L38 23.3 L33.3 26.5 Z" fill="#a8b8c4"/><path d="M14.2 24 L33.3 26.5" stroke="#c4d0d8" stroke-width="0.7"/><path d="M21.8 22.4 Q22.3 18.7 26 19 Q30 19.4 30.4 23.6" fill="none" stroke="#182024" stroke-width="1.4"/><rect x="17.8" y="25.2" width="1.9" height="3.3" fill="#e4e8ec" stroke="#5c6874" stroke-width="0.4"/><rect x="25.8" y="26.8" width="1.9" height="3.3" fill="#e4e8ec" stroke="#5c6874" stroke-width="0.4"/></svg>
<svg class="a" style="left:112px;top:678px" width="50" height="40" viewBox="0 0 50 40"><defs><linearGradient id="g3" x1="0" y1="0" x2="0" y2="1"><stop offset="0" stop-color="#a8daf2"/><stop offset="0.42" stop-color="#3f9ad4"/><stop offset="0.5" stop-color="#2a7ccb"/><stop offset="1" stop-color="#3f93d8"/></linearGradient></defs><path d="M17.6 10.2 L37.4 10.2 Q39.2 10.2 38.8 12 L35.1 30 Q34.7 31.7 33 31.7 L13.4 31.7 Q11.7 31.7 12.1 30 L15.9 12 Q16.3 10.2 17.6 10.2 Z" fill="url(#g3)" stroke="#1b76b8" stroke-width="1"/><path d="M21.6 13.8 L28.4 20.3 L18.8 27" fill="none" stroke="#fff" stroke-width="1.8" stroke-linecap="round" stroke-linejoin="miter"/><rect x="24" y="26" width="5.8" height="1.5" fill="#b4dcf4"/></svg>
<svg class="a" style="left:162px;top:678px" width="50" height="40" viewBox="0 0 50 40"><defs><linearGradient id="g4" x1="0" y1="0" x2="1" y2="1"><stop offset="0" stop-color="#fcf2bc"/><stop offset="1" stop-color="#ecc960"/></linearGradient><linearGradient id="g5" x1="0" y1="0" x2="0" y2="1"><stop offset="0" stop-color="#b4e2fa"/><stop offset="0.5" stop-color="#6cbcec"/><stop offset="1" stop-color="#9ad4f6"/></linearGradient></defs><path d="M10.6 13 L10.6 9.6 Q10.6 8.4 11.8 8.4 L24.6 8.4 Q25.6 8.4 25.6 9.6 L25.6 13 Z" fill="#f6e29a" stroke="#d8b050" stroke-width="0.7"/><rect x="12.8" y="8.9" width="3.3" height="2.2" fill="#1cc02c"/><rect x="16.1" y="8.9" width="5" height="2.2" fill="#fff"/><path d="M19.6 13.4 L19.6 11.4 Q19.6 10.4 20.6 10.4 L38.8 10.4 Q39.8 10.4 39.8 11.4 L39.8 14 Z" fill="#f2d888" stroke="#d8b050" stroke-width="0.7"/><rect x="21.1" y="10.8" width="2.8" height="2" fill="#d82c2c"/><rect x="23.9" y="10.8" width="6.1" height="2" fill="#fff"/><path d="M9.4 13.4 Q9.4 12.6 10.2 12.6 L26.6 12.600 L27.800 15.800 L40 15.800 Q40.800 15.800 40.800 16.600 L40.800 33.600 Q40.800 34.600 39.800 34.600 L10.400 34.600 Q9.400 34.600 9.400 33.600 Z" fill="url(#g4)" stroke="#d8b050" stroke-width="0.8"/><path d="M27.200 15.900 L27.200 13.800 Q27.200 12.900 28.100 12.900 L39.400 12.900 Q40.300 12.900 40.300 13.800 L40.300 15.900 Z" fill="#f6e094" stroke="#d8b050" stroke-width="0.7"/><rect x="29.200" y="13.100" width="2.800" height="1.900" fill="#2c94ec"/><rect x="32" y="13.100" width="5" height="1.900" fill="#fff"/><path d="M10.300 15 L26 15" stroke="#fff" stroke-width="0.9"/><path d="M13.100 36.900 L13.100 25.500 Q13.100 23.900 14.700 23.900 L35.300 23.900 Q36.900 23.900 36.900 25.500 L36.900 36.900 L30.300 36.900 L30.300 30.300 L19.700 30.300 L19.700 36.900 Z" fill="url(#g5)" stroke="#3c9cdc" stroke-width="0.9"/><path d="M14.500 25.300 L35.500 25.300" stroke="#e4f6ff" stroke-width="1"/></svg>
<div class="a" style="left:213px;top:680px;width:48px;height:38px;background:#d4d0c8;box-shadow:inset -1px -1px 0 #404040,inset 1px 1px 0 #fff,inset -2px -2px 0 #808080"></div>
<svg class="a" style="left:212px;top:678px" width="50" height="40" viewBox="0 0 50 40"><defs><linearGradient id="g6" x1="0" y1="0" x2="0" y2="1"><stop offset="0" stop-color="#2c8cc8"/><stop offset="1" stop-color="#14579c"/></linearGradient><linearGradient id="g6b" x1="0" y1="0" x2="1" y2="0"><stop offset="0" stop-color="#f4f4f8"/><stop offset="0.45" stop-color="#e4e6ea"/><stop offset="0.55" stop-color="#b4b8bc"/><stop offset="1" stop-color="#c4c8cc"/></linearGradient></defs><path d="M12.400 5.300 L37.300 5.300 L39.600 29.500 L10.200 29.500 Z" fill="url(#g6)"/><path d="M12.400 5.300 L37.300 5.300 L37.500 7 L12.200 7 Z" fill="#d4eaf6"/><path d="M12.300 7 L22 7 L18 12.500 L11.800 12 Z" fill="#bfe0f2" opacity="0.85"/><path d="M9.200 29.300 L40.800 29.300 L40.600 33.500 Q40 36.700 35 36.700 L15 36.700 Q10 36.700 9.400 33.500 Z" fill="#e6eaee" stroke="#b4bcc4" stroke-width="0.6"/><path d="M9.600 32.600 L40.400 32.600" stroke="#3a9cdc" stroke-width="1.700"/><ellipse cx="25.100" cy="20.300" rx="12.400" ry="8.900" fill="url(#g6b)" stroke="#9ca4ac" stroke-width="0.4"/><path d="M18.900 24.800 L20.300 20.300 L28.300 11.300 L32.800 15.200 L24.200 24 Z" fill="#26a6e6"/><path d="M28.300 11.300 L30 9.600 L34.500 13.500 L32.800 15.200 Z" fill="#c8ecfc"/><path d="M18.900 24.800 L20.300 20.300 L24.200 24 Z" fill="#e8c878"/><path d="M18.900 24.800 L19.700 22.200 L21.900 24.200 Z" fill="#40464c"/></svg>
<div class="a" style="left:263px;top:680px;width:48px;height:38px;background:#fff;box-shadow:inset 1px 1px 0 #404040,inset 2px 2px 0 #404040,inset -1px -1px 0 #fff,inset -2px -2px 0 #d4d0c8"></div>
<svg class="a" style="left:262px;top:678px" width="50" height="40" viewBox="0 0 50 40"><defs><linearGradient id="g7" x1="0" y1="0" x2="0" y2="1"><stop offset="0" stop-color="#d42424"/><stop offset="1" stop-color="#b41414"/></linearGradient></defs><rect x="9.400" y="5.200" width="25.700" height="20.400" rx="1.200" fill="#f4f6f8" stroke="#74849c" stroke-width="0.9"/><rect x="10" y="5.700" width="24.500" height="1.600" fill="#8494ac"/><rect x="10" y="8" width="24.500" height="1.200" fill="#8c9cb4"/><rect x="29" y="6" width="0.900" height="0.900" fill="#fff"/><rect x="31" y="6" width="0.900" height="0.900" fill="#fff"/><rect x="33" y="6" width="0.900" height="0.900" fill="#fff"/><path d="M17.500 9.500 L17.500 25" stroke="#6c7c98" stroke-width="0.800"/><path d="M11.100 12.500 H15 M12 14.400 H14 M12 16.400 H15 M12 18.300 H14" stroke="#4c5870" stroke-width="0.900"/><path d="M38 28 L41 27.500 L41 31 L38 32.800 Z" fill="#dcdcdc" opacity="0.7"/><path d="M11.100 22 L31.100 25.500 L31.100 36.700 L11.100 31.700 Z" fill="url(#g7)"/><path d="M31.100 25.500 L38 23.300 L38 32.800 L31.100 36.700 Z" fill="#cc2020"/><path d="M11.100 22 L11.400 20.600 L19.400 18.900 L38 22.400 L38 23.300 L31.100 25.500 Z" fill="#e03434"/><path d="M12.500 21.400 L24 23.400" stroke="#f4a898" stroke-width="1"/><path d="M20.400 20.800 Q21 17.800 24.200 18.300 Q28.200 19 28.900 22.600" fill="none" stroke="#14181c" stroke-width="1.400"/><rect x="15" y="25" width="1.700" height="3.300" fill="#d4dce4" stroke="#7c1010" stroke-width="0.400"/><rect x="25" y="27" width="1.800" height="3.500" fill="#d4dce4" stroke="#7c1010" stroke-width="0.400"/></svg>
<div class="a" style="left:1130px;top:680px;width:148px;height:38px;border:1px solid;border-color:#808080 #fff #fff #808080;"></div>
<svg class="a" style="left:1136px;top:692px" width="8" height="10" viewBox="0 0 8 10"><path d="M1 4.500 L4 1.500 L7 4.500 M1 8.500 L4 5.500 L7 8.500" fill="none" stroke="#000" stroke-width="1.500"/></svg>
<svg class="a" style="left:1152px;top:690px" width="18" height="18" viewBox="0 0 18 18"><rect x="1.700" y="1.300" width="1.800" height="15.500" rx="0.800" fill="#fff" stroke="#8c9098" stroke-width="0.700"/><path d="M3.800 3.800 Q6.500 2.600 9 4.200 Q12 6 16.300 4.600 Q15.800 9 12.500 10.800 Q9.500 11.800 3.800 10.300 Z" fill="#fff" stroke="#8c9098" stroke-width="0.800"/></svg>
<svg class="a" style="left:1176px;top:690px" width="18" height="18" viewBox="0 0 18 18"><rect x="6.300" y="4.300" width="9.700" height="9.200" fill="#9c9ea2" stroke="#f4f4f4" stroke-width="1.300"/><rect x="5.300" y="3.300" width="11.700" height="11.200" fill="none" stroke="#8a8e94" stroke-width="0.600"/><rect x="8.500" y="15" width="6" height="1.600" fill="#fff" stroke="#8c9094" stroke-width="0.500"/><path d="M3.700 7 L3.700 15.500 L8 15.500" fill="none" stroke="#fff" stroke-width="1.500"/><path d="M3.700 7 L3.700 15.500" stroke="#a0a4a8" stroke-width="0.500"/><rect x="1.300" y="1.800" width="4.800" height="5.600" rx="1" fill="#fff" stroke="#5c6064" stroke-width="0.800"/><path d="M2.900 2.200 L2.900 5 M4.500 2.200 L4.500 5" stroke="#5c6064" stroke-width="0.700"/></svg>
<div class="t" style="left:1210px;top:685px;letter-spacing:-0.407px;word-spacing:0.38px;">2:39 PM</div>
<div class="t" style="left:1205px;top:700px;letter-spacing:0.007px;">6/19/2019</div>
<svg class="a" style="left:1260px;top:693px" width="16" height="13" viewBox="0 0 16 13"><defs><linearGradient id="g8" x1="0" y1="0" x2="1" y2="1"><stop offset="0" stop-color="#2858c0"/><stop offset="1" stop-color="#58a0e8"/></linearGradient></defs><rect x="0.500" y="0.500" width="14.500" height="11.500" fill="url(#g8)" stroke="#88b8e8" stroke-width="1"/><rect x="1" y="9.500" width="13.500" height="2" fill="#202830"/><rect x="1.500" y="9.800" width="2" height="1.500" fill="#e8a020"/></svg>
</body></html>
